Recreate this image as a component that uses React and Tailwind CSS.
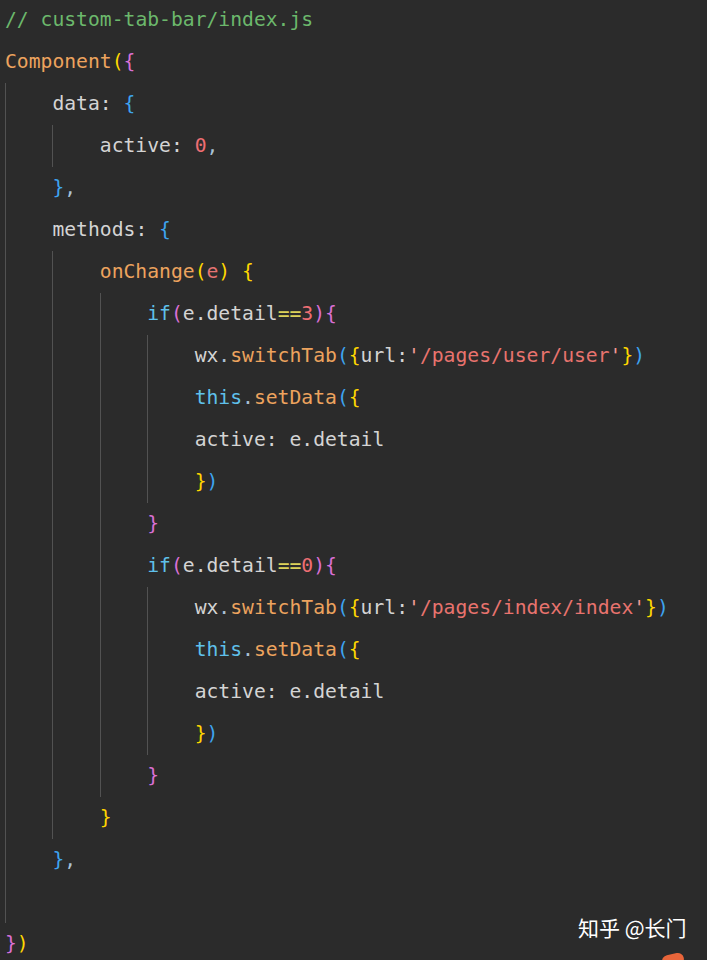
const C = {
  txt: 'text-[#d4d4d4]',
  cm: 'text-[#6cb86c]',
  fn: 'text-[#eda35e]',
  kw: 'text-[#5fc0ea]',
  num: 'text-[#ee6e73]',
  str: 'text-[#e8736e]',
  q: 'text-[#ee9a96]',
  op: 'text-[#dcd25a]',
  pm: 'text-[#e57373]',
  pu: 'text-[#a9c1d6]',
  gold: 'text-[#ffd700]',
  pink: 'text-[#da70d6]',
  blue: 'text-[#3ea4f0]',
};

// [indent, guides, tokens]
const lines = [
  [0, 0, [['// custom-tab-bar/index.js', 'cm']]],
  [0, 0, [['Component', 'fn'], ['(', 'gold'], ['{', 'pink']]],
  [1, 1, [['data: ', 'txt'], ['{', 'blue']]],
  [2, 2, [['active: ', 'txt'], ['0', 'num'], [',', 'pu']]],
  [1, 1, [['}', 'blue'], [',', 'pu']]],
  [1, 1, [['methods: ', 'txt'], ['{', 'blue']]],
  [2, 2, [['onChange', 'fn'], ['(', 'gold'], ['e', 'pm'], [')', 'gold'], [' ', 'txt'], ['{', 'gold']]],
  [3, 3, [['if', 'kw'], ['(', 'pink'], ['e.detail', 'txt'], ['==', 'op'], ['3', 'num'], [')', 'pink'], ['{', 'pink']]],
  [4, 4, [['wx', 'txt'], ['.', 'pu'], ['switchTab', 'fn'], ['(', 'blue'], ['{', 'gold'], ['url:', 'txt'], ["'", 'q'], ['/pages/user/user', 'str'], ["'", 'q'], ['}', 'gold'], [')', 'blue']]],
  [4, 4, [['this', 'kw'], ['.', 'pu'], ['setData', 'fn'], ['(', 'blue'], ['{', 'gold']]],
  [4, 4, [['active: e.detail', 'txt']]],
  [4, 4, [['}', 'gold'], [')', 'blue']]],
  [3, 3, [['}', 'pink']]],
  [3, 3, [['if', 'kw'], ['(', 'pink'], ['e.detail', 'txt'], ['==', 'op'], ['0', 'num'], [')', 'pink'], ['{', 'pink']]],
  [4, 4, [['wx', 'txt'], ['.', 'pu'], ['switchTab', 'fn'], ['(', 'blue'], ['{', 'gold'], ['url:', 'txt'], ["'", 'q'], ['/pages/index/index', 'str'], ["'", 'q'], ['}', 'gold'], [')', 'blue']]],
  [4, 4, [['this', 'kw'], ['.', 'pu'], ['setData', 'fn'], ['(', 'blue'], ['{', 'gold']]],
  [4, 4, [['active: e.detail', 'txt']]],
  [4, 4, [['}', 'gold'], [')', 'blue']]],
  [3, 3, [['}', 'pink']]],
  [2, 2, [['}', 'gold']]],
  [1, 1, [['}', 'blue'], [',', 'pu']]],
  [1, 1, []],
  [0, 0, [['}', 'pink'], [')', 'gold']]],
];

function Line({ indent, guides, tokens }) {
  const cols = [];
  for (let i = 0; i < indent; i++) {
    cols.push(
      <span
        key={i}
        className={`w-[4ch] shrink-0 ${i < guides ? 'border-l border-[#525252]' : ''}`}
      />
    );
  }
  return (
    <div className="flex h-[42px]">
      {cols}
      <span className="self-center whitespace-pre">
        {tokens.map(([t, c], i) => (
          <span key={i} className={C[c]}>{t}</span>
        ))}
      </span>
    </div>
  );
}

export default function App() {
  return (
    <div className="relative w-[707px] h-[960px] overflow-hidden bg-[#2b2b2b]">
      <div className="-mt-[1px] pl-[5px] font-['DejaVu_Sans_Mono',monospace] text-[19.7px] leading-none">
        {lines.map(([indent, guides, tokens], i) => (
          <Line key={i} indent={indent} guides={guides} tokens={tokens} />
        ))}
      </div>

      {/* watermark */}
      <div className="absolute left-[578px] top-[917px] text-[21px] leading-none text-white font-['Noto_Sans_CJK_SC',sans-serif] whitespace-nowrap">
        知乎 @长门
      </div>
      <div className="absolute left-[662px] top-[954px] w-[22px] h-[12px] rounded-full bg-[#e8653a] -rotate-12" />
    </div>
  );
}
